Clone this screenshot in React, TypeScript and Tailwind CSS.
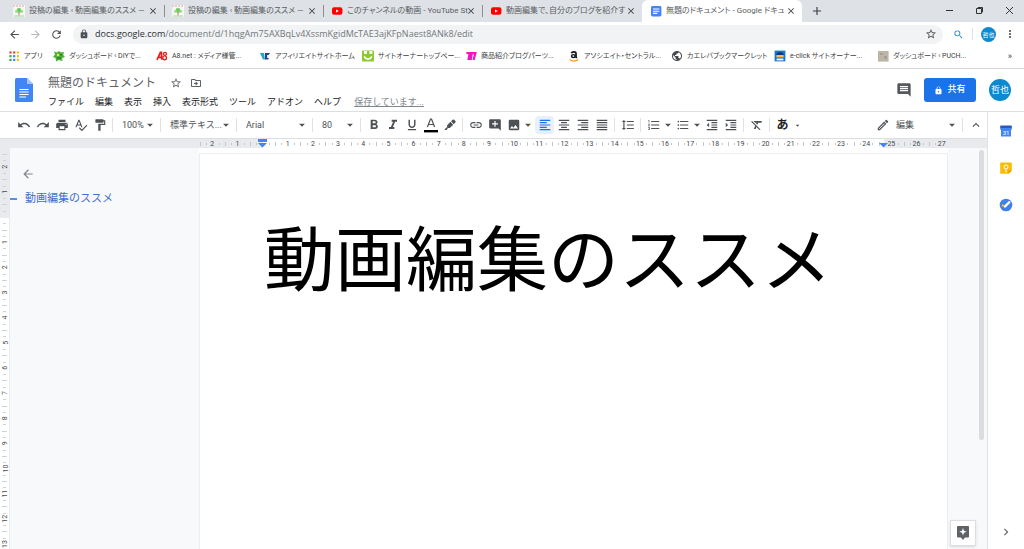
import React from "react";
import {
  MdAdd, MdAddComment, MdArrowBack, MdArrowDropDown, MdArrowForward, MdChevronRight, MdClose, MdComment,
  MdFormatAlignCenter, MdFormatAlignJustify, MdFormatAlignLeft, MdFormatAlignRight, MdFormatBold,
  MdFormatClear, MdFormatIndentDecrease, MdFormatIndentIncrease, MdFormatItalic, MdFormatLineSpacing,
  MdFormatListBulleted, MdFormatListNumbered, MdFormatPaint, MdFormatUnderlined, MdImage, MdKeyboardArrowUp,
  MdLink, MdLock, MdMoreVert, MdOutlineDriveFileMove, MdOutlineEdit, MdPrint, MdPublic, MdRedo, MdRefresh,
  MdSearch, MdSpellcheck, MdStarBorder, MdUndo,
} from "react-icons/md";

const WpIcon = () => (
  <svg viewBox="0 0 12 12" className="size-3 shrink-0">
    <rect width="12" height="12" fill="#f5f7f2" />
    <path d="M0 1h12" stroke="#ef9aa8" strokeDasharray="2 1" />
    <circle cx="6" cy="5.4" r="2.4" fill="#6ccb5c" />
    <circle cx="3.4" cy="6.4" r="1.4" fill="#97dc8a" />
    <circle cx="8.8" cy="6.4" r="1.4" fill="#97dc8a" />
    <path d="M6 7v3.500" stroke="#c9706c" strokeWidth="1" />
    <path d="M1 11h10" stroke="#9bdc8c" />
  </svg>
);

const YoutubeIcon = () => (
  <svg viewBox="0 0 12 12" className="size-3 shrink-0">
    <rect x="1" y="2.2" width="10.4" height="7.6" rx="2" fill="#f00" />
    <path d="M5 4.4v3.2L7.9 6z" fill="#fff" />
  </svg>
);

const DocsTabIcon = () => (
  <svg viewBox="0 0 12 12" className="size-3 shrink-0">
    <rect x="1" y="1" width="10.4" height="10.4" rx="1.4" fill="#4285f4" />
    <path d="M3 4h6.4M3 6.2h6.4M3 8.4h4.4" stroke="#fff" strokeWidth="1.1" />
  </svg>
);

const AppsIcon = () => (
  <svg viewBox="0 0 12 12" className="size-3 shrink-0">
    {["#ea4335", "#ea4335", "#fbbc04", "#34a853", "#4285f4", "#fbbc04", "#34a853", "#4285f4", "#fbbc04"].map((c, i) => (
      <rect key={i} x={1.4 + (i % 3) * 3.7} y={1.4 + Math.floor(i / 3) * 3.7} width="2.2" height="2.2" fill={c} />
    ))}
  </svg>
);

const LeafIcon = () => (
  <svg viewBox="0 0 12 12" className="size-3 shrink-0">
    <path d="M1 1.5l3 1L6 1l2 1.6 3-.6-.8 3L12 7l-3 1 .6 3L6 10l-3 1.6L2.6 8 0 7l2-2.4z" fill="#4caf3a" />
    <circle cx="5" cy="5" r="1.3" fill="#f4e04d" />
    <path d="M7 4.6l2 .4M4 8h4" stroke="#1f6b22" />
  </svg>
);

const A8Icon = () => (
  <svg viewBox="0 0 12 12" className="size-3 shrink-0">
    <path d="M1 9.8L4.400 2.400h1l.4 7.400M2.400 7.400h3.200" stroke="#e3201b" strokeWidth="1.700" fill="none" />
    <circle cx="9" cy="3.800" r="1.500" stroke="#e3201b" strokeWidth="1.300" fill="none" />
    <circle cx="8.600" cy="7.800" r="1.900" stroke="#e3201b" strokeWidth="1.400" fill="none" />
  </svg>
);

const VcIcon = () => (
  <svg viewBox="0 0 12 12" className="size-3 shrink-0">
    <path d="M1 3l3 6.5h2L5 3z" fill="#1ba9c4" />
    <path d="M6 3h5L9.6 5H8.2v3l2 .3L9 9.6H6z" fill="#2d3f94" />
  </svg>
);

const OwnerIcon = () => (
  <svg viewBox="0 0 12 12" className="size-3 shrink-0">
    <rect y=".6" width="12" height="10.8" rx="1" fill="#8ccb2f" />
    <path d="M2 1h3v3H2zM7.4 1h3v3h-3z" fill="#fff" />
    <path d="M2.4 6.4c1 3.6 6.2 3.6 7.2 0" stroke="#fff" strokeWidth="1.6" fill="none" />
  </svg>
);

const PinkIcon = () => (
  <svg viewBox="0 0 12 12" className="size-3 shrink-0">
    <path d="M1.4 3h3.4L3.4 10M5.6 10l1.2-6.8h3.6L8.6 10" stroke="#f312c4" strokeWidth="2.2" fill="none" />
  </svg>
);

const AmazonIcon = () => (
  <svg viewBox="0 0 12 12" className="size-3 shrink-0">
    <path d="M3.4 3.2C4 1.4 8 1.2 8 3.6v3.6l.8.8" stroke="#111" strokeWidth="1.7" fill="none" />
    <ellipse cx="5.3" cy="6.1" rx="1.8" ry="1.5" stroke="#111" strokeWidth="1.4" fill="none" />
    <path d="M1.6 9.4c2.6 2 6 2 8.6.2" stroke="#f90" strokeWidth="1.2" fill="none" />
  </svg>
);

const EclickIcon = () => (
  <svg viewBox="0 0 12 12" className="size-3 shrink-0">
    <rect x=".6" y=".6" width="10.8" height="10.8" fill="#1976d2" />
    <path d="M2 5c1-4 7-4 8 0z" fill="#0d3e73" />
    <rect x="2.4" y="5" width="7.2" height="2.4" fill="#f5c04a" />
    <path d="M2.6 10.4V8.6h6.8v1.8" fill="#fff" />
  </svg>
);

const BeigeIcon = () => (
  <svg viewBox="0 0 12 12" className="size-3 shrink-0">
    <rect x="1" y="1" width="10.6" height="10.6" fill="#bdb5a5" />
    <path d="M3 3h3v2H3zM7 6h3v3H7z" fill="#aaa190" />
  </svg>
);

const tabs = [
  { icon: <WpIcon />, title: "投稿の編集 ‹ 動画編集のススメ —" },
  { icon: <WpIcon />, title: "投稿の編集 ‹ 動画編集のススメ —" },
  { icon: <YoutubeIcon />, title: "このチャンネルの動画 - YouTube St" },
  { icon: <YoutubeIcon />, title: "動画編集で、自分のブログを紹介す" },
  { icon: <DocsTabIcon />, title: "無題のドキュメント - Google ドキュ", active: true },
];

const bookmarks = [
  { icon: <LeafIcon />, label: "ダッシュボード ‹ DIYで..." },
  { icon: <A8Icon />, label: "A8.net : メディア様管..." },
  { icon: <VcIcon />, label: "アフィリエイトサイトホーム" },
  { icon: <OwnerIcon />, label: "サイトオーナートップペー..." },
  { icon: <PinkIcon />, label: "商品紹介ブログパーツ..." },
  { icon: <AmazonIcon />, label: "アソシエイト・セントラル..." },
  { icon: <MdPublic className="size-3 shrink-0 text-[#45484c]" />, label: "カエレバブックマークレット" },
  { icon: <EclickIcon />, label: "e-click サイトオーナー..." },
  { icon: <BeigeIcon />, label: "ダッシュボード ‹ PUCH..." },
];

function TabStrip() {
  return (
    <div className="flex h-[22px] items-end bg-[#dee1e6] pl-1.5">
      {tabs.map((t, i) => (
        <div
          key={i}
          className={
            t.active
              ? "flex h-[22px] w-40 min-w-0 items-center rounded-t-md bg-white pr-1.5 pl-2"
              : "flex h-[22px] w-[159px] min-w-0 items-center pr-1.5 pl-[7px]"
          }
        >
          {t.icon}
          <span className="ml-1 min-w-0 flex-1 text-[8px] leading-4 whitespace-nowrap text-[#5a5e62]">{t.title}</span>
          <button aria-label="タブを閉じる" className="text-[#3c4043]">
            <MdClose className="size-2.5" />
          </button>
          {i < 3 && <span className="ml-1.5 -mr-1.5 h-3 w-px bg-[#8b8f94]" />}
        </div>
      ))}
      <button aria-label="新しいタブ" className="ml-2 self-center text-[#3c4043]">
        <MdAdd className="size-3.5" />
      </button>
      <div className="ml-auto flex h-5 items-center self-start text-[#333]">
        <button aria-label="最小化" className="flex w-[30px] justify-center">
          <svg viewBox="0 0 9 9" className="size-[9px]"><path d="M1 4.500h7" stroke="currentColor" /></svg>
        </button>
        <button aria-label="元に戻す" className="flex w-[30px] justify-center">
          <svg viewBox="0 0 9 9" className="size-[9px]" fill="none" stroke="currentColor">
            <path d="M1.500 2.500h5v5h-5zM3 2.500v-1h4.500v4.500h-1" />
          </svg>
        </button>
        <button aria-label="閉じる" className="flex w-[30px] justify-center">
          <svg viewBox="0 0 9 9" className="size-[9px]" stroke="currentColor"><path d="M1 1l7 7M8 1L1 8" /></svg>
        </button>
      </div>
    </div>
  );
}

function AddressBar() {
  return (
    <div className="flex h-6 items-center gap-2 bg-white pr-2 pl-2 text-[#4d5155]">
      <button aria-label="戻る"><MdArrowBack className="size-[13px]" /></button>
      <button aria-label="進む" className="text-[#b5b8bb]"><MdArrowForward className="size-[13px]" /></button>
      <button aria-label="再読み込み"><MdRefresh className="size-[13px]" /></button>
      <div className="ml-0.5 flex h-[19px] min-w-0 flex-1 items-center rounded-full bg-[#f1f3f4] pr-1.5 pl-1.5">
        <MdLock className="size-2.5 shrink-0" />
        <a href="#document" className="ml-1.5 flex-1 truncate font-['Open_Sans',sans-serif] text-[9px] text-[#74787c]">
          <span className="text-[#2c2f33]">docs.google.com</span>/document/d/1hqgAm75AXBqLv4XssmKgidMcTAE3ajKFpNaest8ANk8/edit
        </a>
        <button aria-label="ブックマークに追加"><MdStarBorder className="size-3" /></button>
      </div>
      <button aria-label="検索" className="ml-0.5 text-[#1e88e5]"><MdSearch className="size-[11px]" /></button>
      <span className="h-3 w-px bg-[#e0e2e5]" />
      <button className="size-[15px] rounded-full bg-[#0b8ad0] text-[6px] leading-[15px] text-white">哲也</button>
      <button aria-label="メニュー"><MdMoreVert className="size-3" /></button>
    </div>
  );
}

function BookmarkBar() {
  return (
    <nav className="flex h-[23px] items-center border-b border-[#d5d7da] bg-white pr-3 pb-0.5 pl-2 text-[7px] whitespace-nowrap text-[#3c4043]">
      <a href="#apps" className="flex w-[45px] shrink-0 items-center gap-1">
        <AppsIcon />アプリ
      </a>
      {bookmarks.map((b) => (
        <a key={b.label} href="#bookmark" className="flex w-[103px] items-center gap-1">
          {b.icon}
          <span>{b.label}</span>
        </a>
      ))}
      <button aria-label="その他のブックマーク" className="ml-auto text-[9px] leading-3">»</button>
    </nav>
  );
}

function DocsHeader() {
  return (
    <header className="flex h-[43px] items-center border-b border-[#dcdee1] bg-white pr-[13px] pl-[15px]">
      <svg viewBox="0 0 18 24" className="h-6 w-[18px] shrink-0">
        <path d="M1.600 0H12l6 6v16.400q0 1.600-1.600 1.600H1.600Q0 24 0 22.400V1.600Q0 0 1.600 0z" fill="#4285f4" />
        <path d="M12 0l6 6h-6z" fill="#a6c5fa" />
        <path d="M4.400 11.500h9.200M4.400 14h9.200M4.400 16.500h9.200M4.400 19h6.600" stroke="#fff" strokeWidth="1.200" />
      </svg>
      <div className="ml-[15px] flex flex-col gap-px pt-1">
        <div className="flex items-center gap-2 text-[#5f6368]">
          <span className="mr-1.5 text-[12px] leading-[18px]">無題のドキュメント</span>
          <button aria-label="スターを付ける"><MdStarBorder className="size-3" /></button>
          <button aria-label="移動"><MdOutlineDriveFileMove className="size-3" /></button>
        </div>
        <div className="flex items-center gap-[11px] text-[9px] leading-[18px] text-[#202124]">
          {["ファイル", "編集", "表示", "挿入", "表示形式", "ツール", "アドオン", "ヘルプ"].map((m) => (
            <button key={m}>{m}</button>
          ))}
          <a href="#saving" className="ml-0.5 text-[#80868b] underline">保存しています...</a>
        </div>
      </div>
      <button aria-label="コメント履歴" className="ml-auto text-[#55595e]"><MdComment className="size-4" /></button>
      <button className="ml-3 flex h-6 w-[52px] items-center justify-center gap-1 rounded-[3px] bg-[#1a73e8] text-[9px] font-medium text-white">
        <MdLock className="size-[9px]" />共有
      </button>
      <button className="ml-[13px] size-[22px] rounded-full bg-[#0b8ad0] text-[9px] leading-[22px] text-white">哲也</button>
    </header>
  );
}

const Sep = () => <span className="mx-[3px] h-3.5 w-px shrink-0 bg-[#dfe1e4]" />;

function Tool({ label, active, children }: { label: string; active?: boolean; children: React.ReactNode }) {
  return (
    <button
      aria-label={label}
      className={
        active
          ? "flex h-[18px] w-[19px] shrink-0 items-center justify-center rounded-sm bg-[#e8f0fe] text-[#1a73e8]"
          : "flex h-[18px] w-[19px] shrink-0 items-center justify-center"
      }
    >
      {children}
    </button>
  );
}

const Drop = ({ label }: { label: string }) => (
  <button aria-label={label} className="flex w-2.5 shrink-0 justify-center"><MdArrowDropDown className="size-3.5 shrink-0" /></button>
);

function Picker({ label, value, width }: { label: string; value: string; width: string }) {
  return (
    <label className={`grid shrink-0 items-center ${width}`}>
      <select
        aria-label={label}
        className="col-start-1 row-start-1 w-full appearance-none bg-transparent pl-1.5 text-[9px] leading-4 text-[#4d5155]"
      >
        <option>{value}</option>
      </select>
      <MdArrowDropDown className="pointer-events-none col-start-1 row-start-1 size-3.5 justify-self-end" />
    </label>
  );
}

function Toolbar() {
  const s = "size-3.5";
  return (
    <div className="flex h-[27px] items-center border-b border-[#dcdee1] bg-white pr-0.5 pl-3.5 text-[#4d5155]">
      <Tool label="元に戻す"><MdUndo className={s} /></Tool>
      <Tool label="やり直し"><MdRedo className={s} /></Tool>
      <Tool label="印刷"><MdPrint className={s} /></Tool>
      <Tool label="スペルチェック"><MdSpellcheck className={s} /></Tool>
      <Tool label="書式を貼り付け"><MdFormatPaint className={s} /></Tool>
      <Sep />
      <Picker label="ズーム" value="100%" width="w-[41px]" />
      <Sep />
      <Picker label="スタイル" value="標準テキス..." width="w-[69px]" />
      <Sep />
      <Picker label="フォント" value="Arial" width="w-[69px]" />
      <Sep />
      <Picker label="フォントサイズ" value="80" width="w-[41px]" />
      <Sep />
      <Tool label="太字"><MdFormatBold className="size-4" /></Tool>
      <Tool label="斜体"><MdFormatItalic className="size-4" /></Tool>
      <Tool label="下線"><MdFormatUnderlined className={s} /></Tool>
      <Tool label="テキストの色">
        <svg viewBox="0 0 14 16" className="h-4 w-3.5">
          <path d="M3.400 10L6.500 2h1L10.600 10M4.500 7.500h5" fill="none" stroke="currentColor" strokeWidth="1.200" />
          <path d="M0 13h14v2.400H0z" fill="#000" />
        </svg>
      </Tool>
      <Tool label="ハイライトの色">
        <svg viewBox="0 0 14 14" className="size-3.5" fill="currentColor">
          <path d="M8 3.200L10 1.600q.6-.4 1.200.2l1.200 1.200q.6.600.100 1.200L10.800 6.200zM7.300 3.800l2.900 3L6.800 10H4.200L4 7.400zM3.400 9.200l1.400 1.400L3.600 12H1.400z" />
        </svg>
      </Tool>
      <Sep />
      <Tool label="リンクを挿入"><MdLink className={s} /></Tool>
      <Tool label="コメントを追加"><MdAddComment className={s} /></Tool>
      <Tool label="画像を挿入"><MdImage className={s} /></Tool>
      <Drop label="画像オプション" />
      <span className="w-0.5 shrink-0" />
      <Tool label="左揃え" active><MdFormatAlignLeft className={s} /></Tool>
      <Tool label="中央揃え"><MdFormatAlignCenter className={s} /></Tool>
      <Tool label="右揃え"><MdFormatAlignRight className={s} /></Tool>
      <Tool label="両端揃え"><MdFormatAlignJustify className={s} /></Tool>
      <Sep />
      <Tool label="行間隔"><MdFormatLineSpacing className={s} /></Tool>
      <Sep />
      <Tool label="番号付きリスト"><MdFormatListNumbered className={s} /></Tool>
      <Drop label="番号オプション" />
      <Tool label="箇条書き"><MdFormatListBulleted className={s} /></Tool>
      <Drop label="箇条書きオプション" />
      <Tool label="インデント減"><MdFormatIndentDecrease className={s} /></Tool>
      <Tool label="インデント増"><MdFormatIndentIncrease className={s} /></Tool>
      <Sep />
      <Tool label="書式をクリア"><MdFormatClear className={s} /></Tool>
      <Sep />
      <button className="w-[19px] text-center text-[12px] leading-4 font-bold text-[#202124]">あ</button>
      <button aria-label="入力ツール" className="flex w-2.5 justify-center"><MdArrowDropDown className="size-[9px]" /></button>
      <span className="ml-auto flex items-center">
        <MdOutlineEdit className={s} />
        <Picker label="モード" value="編集" width="w-[69px]" />
      </span>
      <Sep />
      <Tool label="メニューを非表示"><MdKeyboardArrowUp className={s} /></Tool>
    </div>
  );
}

const CM = 25.15;

function HorizontalRuler() {
  const origin = 262.6;
  const marks: React.ReactNode[] = [];
  for (let q = -10; q <= 108; q++) {
    const x = origin + (q * CM) / 4;
    if (q % 4 === 0) {
      if (q !== 0)
        marks.push(<text key={q} x={x} y="7" fontSize="7" textAnchor="middle" fill="#45494d">{Math.abs(q / 4)}</text>);
    } else {
      const h = q % 2 === 0 ? 4 : 2;
      marks.push(<path key={q} d={`M${Math.round(x) + 0.5} ${5 - h / 2}v${h}`} stroke="#c4c7ca" />);
    }
  }
  return (
    <svg className="block h-[9px] w-full bg-[#e8eaed]">
      <rect x="263" width="621" height="9" fill="#fff" />
      {marks}
      <path d="M258 0h9v3h-9zM258 4h9L262.500 8.500z" fill="#4285f4" />
      <path d="M879 4h9L883.500 8.500z" fill="#4285f4" />
    </svg>
  );
}

function VerticalRuler() {
  const origin = 69;
  const marks: React.ReactNode[] = [];
  for (let q = -10; q <= 52; q++) {
    const y = origin + (q * CM) / 4;
    if (q % 4 === 0) {
      if (q !== 0)
        marks.push(
          <text key={q} x="7.500" y={y} fontSize="7" textAnchor="middle" fill="#45494d" transform={`rotate(-90 7.500 ${y})`}>
            {Math.abs(q / 4)}
          </text>
        );
    } else {
      const w = q % 2 === 0 ? 5 : 3;
      marks.push(<path key={q} d={`M${4.5 - w / 2} ${Math.round(y) + 0.5}h${w}`} stroke="#d0d3d6" />);
    }
  }
  return (
    <div className="w-[9px] shrink-0 overflow-hidden bg-white">
      <svg className="block h-full w-full">
        <rect width="9" height="70" fill="#e8eaed" />
        {marks}
      </svg>
    </div>
  );
}

function Workspace() {
  return (
    <div className="flex min-h-0 flex-1">
      <VerticalRuler />
      <aside className="w-[190px] shrink-0 border-l border-[#e8eaed] bg-[#f8f9fa] pt-[19px]">
        <button aria-label="概要を閉じる" className="ml-[11px] flex text-[#80868b]"><MdArrowBack className="size-3.5" /></button>
        <a href="#heading" className="mt-2.5 flex items-center text-[11px] leading-4 text-[#3a70d0]">
          <span className="mr-2 h-0.5 w-[7px] bg-[#5b8de0]" />
          動画編集のススメ
        </a>
      </aside>
      <main className="mt-[5px] min-w-0 flex-1 border border-b-0 border-[#eceef0] bg-white px-16 pt-[55px]">
        <h1
          id="heading"
          className="w-max text-[71px] leading-[104px] whitespace-nowrap text-black outline-none"
          contentEditable
          suppressContentEditableWarning
        >
          動画編集のススメ
        </h1>
      </main>
      <div className="flex w-[39px] shrink-0 flex-col items-start justify-between bg-[#f8f9fa] pt-0.5 pb-[3px]">
        <span className="mr-[3px] h-[290px] w-[5px] self-end rounded-full bg-[#dadce0]" />
        <button aria-label="データ探索" className="ml-0.5 flex size-[26px] items-center justify-center border border-[#dcdee1] bg-white shadow-sm">
          <svg viewBox="0 0 14 16" className="h-4 w-3.5">
            <path d="M2 1h10q1 0 1 1v9.500q0 1-1 1H9L7 15l-2-2.500H2q-1 0-1-1V2q0-1 1-1z" fill="#5f6368" />
            <path d="M7 3l1 2.800 2.800 1L8 7.800 7 10.600 6 7.800l-2.800-1L6 5.800z" fill="#fff" />
          </svg>
        </button>
      </div>
    </div>
  );
}

function SidePanel() {
  return (
    <aside className="flex w-[37px] shrink-0 flex-col items-center gap-[23px] border-l border-[#e0e2e5] bg-white pt-3 pb-2.5">
      <button aria-label="カレンダー">
        <svg viewBox="0 0 14 14" className="block size-3.5">
          <path d="M2 1.500h10q.8 0 .8.800V4H1.200V2.300q0-.8.800-.8z" fill="#2a56c6" />
          <path d="M1.200 4h11.600v1.400l-.8.600v6.500H2V6l-.8-.6z" fill="#4285f4" />
          <text x="7" y="10.500" fontSize="6" textAnchor="middle" fill="#fff">31</text>
        </svg>
      </button>
      <button aria-label="Keep">
        <svg viewBox="0 0 14 14" className="block size-3.5">
          <path d="M2 1.500h10q.8 0 .8.800V9.500L9.500 12.700H2q-.8 0-.8-.8V2.300q0-.8.800-.8z" fill="#fbbc04" />
          <path d="M9.500 12.700V9.500h3.300z" fill="#e59400" />
          <circle cx="7" cy="6" r="2" fill="none" stroke="#fff" />
          <path d="M6 9h2M6 10.300h2" stroke="#fff" strokeWidth=".8" />
        </svg>
      </button>
      <button aria-label="ToDo リスト">
        <svg viewBox="0 0 14 14" className="block size-3.5">
          <circle cx="7" cy="7" r="6.300" fill="#3f7fee" />
          <path d="M5.800 8.600l4.600-4.500" stroke="#fff" strokeWidth="2.200" strokeLinecap="round" />
          <circle cx="3.800" cy="7.400" r="1.200" fill="#fbbc04" />
        </svg>
      </button>
      <button aria-label="サイドパネルを非表示" className="mt-auto text-[#5f6368]"><MdChevronRight className="size-3.5" /></button>
    </aside>
  );
}

export default function App() {
  return (
    <div className="flex h-screen flex-col overflow-hidden bg-white font-['Roboto','Noto_Sans_CJK_JP',sans-serif]">
      <div className="shrink-0 [font-feature-settings:'palt']">
        <TabStrip />
        <AddressBar />
        <BookmarkBar />
      </div>
      <DocsHeader />
      <div className="flex min-h-0 flex-1">
        <div className="flex min-w-0 flex-1 flex-col">
          <Toolbar />
          <HorizontalRuler />
          <Workspace />
        </div>
        <SidePanel />
      </div>
    </div>
  );
}
